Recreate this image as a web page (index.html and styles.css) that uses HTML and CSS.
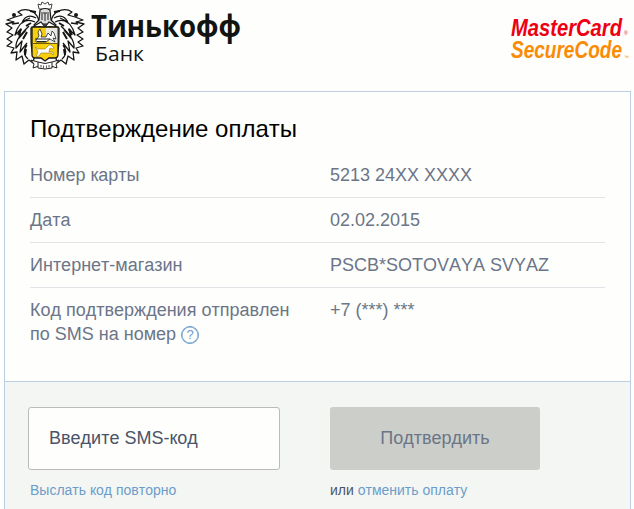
FILE: index.html
```html
<!DOCTYPE html>
<html lang="ru">
<head>
    <meta charset="UTF-8">
    <meta name="viewport" content="width=device-width, initial-scale=1.0">
    <title>Подтверждение оплаты</title>
    <link rel="stylesheet" href="styles.css">
</head>
<body>

<header>
    <div class="bank">
        <svg class="crest" viewBox="0 0 90 72" width="90" height="72">
            <defs>
                <g id="mantle" stroke="#161616" stroke-width="1.3" fill="#fefefc" stroke-linejoin="round">
                    <path d="M38 18 C34 9 24 8 18 12 L22 15 L15 17 L7 20 L14 22 L6 24 L12 28 L7 32 L13 35 L7 39 L12 42 L7 46 L14 48 L11 53 L17 52 L16 60 L22 56 L24 64 L29 60 L33 63 L34 58 C31 51 31 43 31 28 L40 24 Z"/>
                    <path d="M36 18 C29 14 24 17 22 23 C27 19 31 20 35 22 M30 18 C21 21 17 27 15 35 L21 29 L19 38 L26 30 M29 26 C22 33 15 40 16 48 L22 41 L20 52 L27 43 M27 45 C23 50 24 56 28 59 M12 24 L19 23" fill="none"/>
                    <path d="M21 29 L18 35 M27 32 L23 39 M26 49 L25 55 M31 23 L26 26 M36 12 L30 11" fill="none" stroke-width="2"/>
                    <circle cx="14" cy="15" r="2" fill="#161616" stroke="none"/>
                </g>
            </defs>
            <use href="#mantle"/>
            <use href="#mantle" transform="translate(90 0) scale(-1 1)"/>
            <!-- crown and helmet -->
            <path d="M39 9 L38 4 L41 5 L42 2 L45 4 L48 2 L49 5 L52 4 L51 9 Z" fill="#fefefc" stroke="#444" stroke-width="1"/>
            <path d="M40 10 Q45 7 50 10 L51 20 L56 25 L45 28 L34 25 L39 20 Z" fill="#ddd" stroke="#161616" stroke-width="1.2"/>
            <path d="M41 13 H49 M45 13 V21 M42 14 V20 M48 14 V20" stroke="#333" stroke-width="1.1" fill="none"/>
            <path d="M34 26 L41 22 L45 27 L49 22 L56 26" fill="#fefefc" stroke="#161616" stroke-width="1.2"/>
            <path d="M43 24 H47 M45 24 V29" stroke="#161616" stroke-width="1.2"/>
            <!-- shield -->
            <path d="M32 27 H58 V55 Q58 58 54 58 H49 L45 61 L41 58 H36 Q32 58 32 55 Z" fill="#f8cf0b" stroke="#161616" stroke-width="1.3"/>
            <path d="M46 28 H57.400 V43 H50 L46 38 Z" fill="#e8e8e2"/>
            <path d="M32 43.500 H58" stroke="#6d5c10" stroke-width="1"/>
            <path d="M36 40 L39 36 L38 32 L40 29 L42 34 L41 37 H46 L48 33 L51 36 L52 31 L54 33 L56 39 L53 38 L55 42 L50 39 L46 42 H36 Z" fill="#fff" stroke="#222" stroke-width=".8"/>
            <path d="M35 39 H50 M37 41.500 H46" stroke="#222" stroke-width="1.200"/>
            <path d="M35 47 L38 49 H45 L49 45 L51 45 L54 48 L52 49 L50 48 L49 52 L53 52 L53 55 L51 53 L46 53 L41 53 L39 56 L36 57 L38 52 L37 50 Z" fill="#fff" stroke="#8d7512" stroke-width=".6"/>
            <!-- ribbon -->
            <path d="M38 62 L31 60 L34 64 L33 68 L39 66 M52 62 L59 60 L56 64 L57 68 L51 66" fill="#fefefc" stroke="#222" stroke-width="1"/>
            <path d="M38 62 Q45 65 52 62 V68 Q45 70 38 68 Z" fill="#fefefc" stroke="#222" stroke-width="1"/>
            <path d="M41 65 V67.500 M43.500 65.500 V68 M46.500 65.500 V68 M49 65 V67.500" stroke="#555" stroke-width="1"/>
        </svg>
        <svg class="bank-name" viewBox="0 0 160 72" width="160" height="72">
            <text class="brand" x="1" y="36.500" textLength="150" lengthAdjust="spacingAndGlyphs">Тинькофф</text>
            <text class="type" x="5" y="60.500" textLength="49" lengthAdjust="spacingAndGlyphs">Банк</text>
        </svg>
    </div>
    <svg class="securecode" viewBox="0 0 130 76" width="130" height="76">
        <text class="mc" x="7" y="36" textLength="111" lengthAdjust="spacingAndGlyphs">MasterCard</text>
        <text class="sc" x="7" y="58" textLength="111" lengthAdjust="spacingAndGlyphs">SecureCode</text>
        <text class="mark mc-mark" x="120" y="35">®</text>
        <text class="mark sc-mark" x="120" y="59">™</text>
    </svg>
</header>

<main class="payment">
    <section class="details">
        <h1>Подтверждение оплаты</h1>
        <dl>
            <div class="row">
                <dt>Номер карты</dt>
                <dd>5213 24XX XXXX</dd>
            </div>
            <div class="row">
                <dt>Дата</dt>
                <dd>02.02.2015</dd>
            </div>
            <div class="row">
                <dt>Интернет-магазин</dt>
                <dd>PSCB*SOTOVAYA SVYAZ</dd>
            </div>
            <div class="row">
                <dt>Код подтверждения отправлен<br>по SMS на номер <span class="help">?</span></dt>
                <dd>+7 (***) ***</dd>
            </div>
        </dl>
    </section>

    <section class="confirm">
        <div class="code">
            <input type="text" placeholder="Введите SMS-код">
            <p><a href="#">Выслать код повторно</a></p>
        </div>
        <div class="submit">
            <button type="button" disabled>Подтвердить</button>
            <p>или <a href="#">отменить оплату</a></p>
        </div>
    </section>
</main>

</body>
</html>
```
FILE: styles.css
```css
* {
    box-sizing: border-box;
}

body {
    margin: 0;
    height: 509px;
    overflow: hidden;
    display: flex;
    flex-direction: column;
    font-family: "Liberation Sans", Arial, sans-serif;
    font-kerning: none;
    background-color: #fefefc;
    color: #4a5468;
}

header {
    display: flex;
    justify-content: space-between;
    flex: 0 0 91px;
}

.bank {
    display: flex;
}

.crest,
.bank-name,
.securecode {
    display: block;
}

.bank-name {
    font-family: "Open Sans", "Noto Sans", sans-serif;
    fill: #111411;
}

.brand {
    font-size: 30px;
    font-weight: 700;
}

.type {
    font-size: 20.5px;
}

.securecode {
    font-style: italic;
}

.mc,
.sc {
    font-size: 24px;
    font-weight: 700;
}

.mc,
.mc-mark {
    fill: #ed0012;
}

.sc,
.sc-mark {
    fill: #fa8c05;
}

.mark {
    font-size: 5px;
    font-style: normal;
}

.payment {
    flex: 1;
    display: flex;
    flex-direction: column;
    margin: 0 3px 0 4px;
    border: 1px solid #bccfe2;
    border-bottom: none;
}

.details {
    flex: 0 0 290px;
    padding: 21px 25px 0;
    border-bottom: 1px solid #bccfe2;
}

h1 {
    margin: 0 0 8px;
    font-size: 24px;
    line-height: 32px;
    font-weight: normal;
    color: #000;
}

dl {
    margin: 0;
    font-size: 18px;
    line-height: 24px;
    color: #6b7588;
}

.row {
    display: flex;
    padding: 10px 0;
    border-bottom: 1px solid #e0e4e6;
}

.row:last-child {
    border-bottom: none;
}

dt {
    width: 300px;
}

dd {
    margin: 0;
}

.help {
    display: inline-block;
    width: 18px;
    height: 18px;
    border: 1px solid #6b9dca;
    border-radius: 50%;
    box-shadow: inset 0 0 0 .5px #6b9dca;
    font-size: 13px;
    line-height: 16px;
    text-align: center;
    vertical-align: 1px;
    color: #6b9dca;
}

.confirm {
    flex: 1;
    display: flex;
    gap: 50px;
    padding: 25px 23px 0;
    background-color: #f4f6f4;
}

.code {
    width: 252px;
}

.submit {
    width: 210px;
}

input,
button {
    display: block;
    width: 100%;
    height: 63px;
    border-radius: 3px;
    font-family: inherit;
    font-size: 18px;
    font-kerning: none;
}

input {
    padding: 0 20px;
    border: 1px solid #babcba;
    background-color: #fefefc;
}

input::placeholder {
    color: #4a5468;
    opacity: 1;
}

button {
    border: none;
    background-color: #cccec9;
    color: #6b7588;
}

p {
    margin: 12px 0 0;
    font-size: 14px;
    line-height: 16px;
}

.code p {
    padding-left: 2px;
}

a {
    color: #6b9dca;
    text-decoration: none;
}
```
